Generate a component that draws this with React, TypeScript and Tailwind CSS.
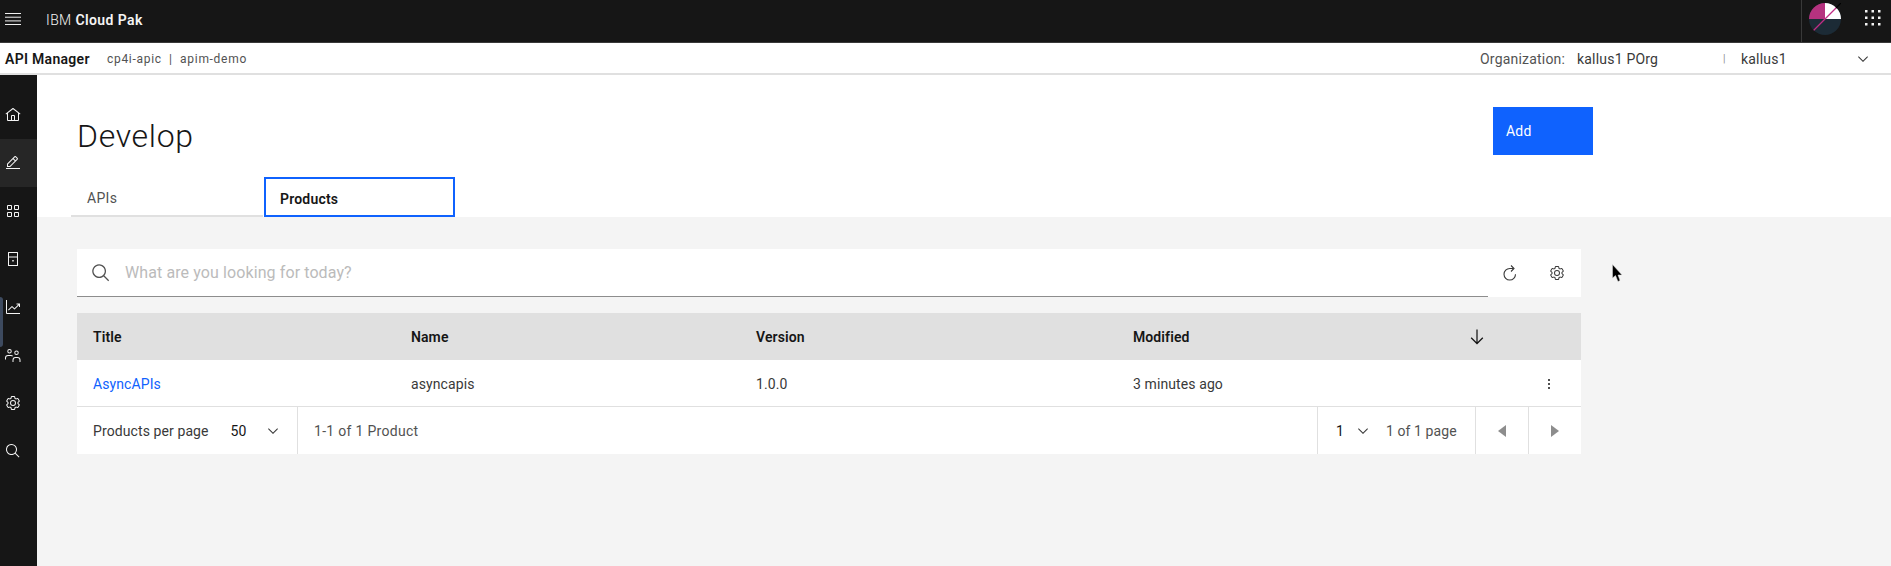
import React from "react";

const GEAR = "M27,16.76c0-.25,0-.5,0-.76s0-.51,0-.77l1.92-1.68A2,2,0,0,0,29.3,11L26.94,7a2,2,0,0,0-1.73-1,2,2,0,0,0-.64.1l-2.43.82a11.35,11.35,0,0,0-1.31-.75l-.51-2.52a2,2,0,0,0-2-1.61H13.64a2,2,0,0,0-2,1.61l-.51,2.52a11.48,11.48,0,0,0-1.32.75L7.43,6.06A2,2,0,0,0,6.79,6,2,2,0,0,0,5.06,7L2.7,11a2,2,0,0,0,.41,2.51L5,15.24c0,.25,0,.5,0,.76s0,.51,0,.77L3.11,18.45A2,2,0,0,0,2.7,21L5.06,25a2,2,0,0,0,1.73,1,2,2,0,0,0,.64-.1l2.43-.82a11.35,11.35,0,0,0,1.31.75l.51,2.52a2,2,0,0,0,2,1.61h4.72a2,2,0,0,0,2-1.61l.51-2.52a11.48,11.48,0,0,0,1.32-.75l2.42.82a2,2,0,0,0,.64.1,2,2,0,0,0,1.73-1L29.3,21a2,2,0,0,0-.41-2.51ZM25.21,24l-3.43-1.16a8.86,8.86,0,0,1-2.71,1.57L18.36,28H13.64l-.71-3.55a9.36,9.36,0,0,1-2.7-1.57L6.79,24,4.43,20l2.72-2.4a8.9,8.9,0,0,1,0-3.13L4.43,12,6.79,8l3.43,1.16a8.86,8.86,0,0,1,2.71-1.57L13.64,4h4.72l.71,3.55a9.36,9.36,0,0,1,2.7,1.57L25.21,8,27.57,12l-2.72,2.4a8.9,8.9,0,0,1,0,3.13L27.57,20Z M16,22a6,6,0,1,1,6-6A5.94,5.94,0,0,1,16,22Zm0-10a3.91,3.91,0,0,0-4,4,3.91,3.91,0,0,0,4,4,3.91,3.91,0,0,0,4-4A3.91,3.91,0,0,0,16,12Z";

const I = ({ children, s = 16, c = "" }: { children: React.ReactNode; s?: number; c?: string }) => (
  <svg width={s} height={s} viewBox="0 0 32 32" fill="currentColor" className={"block shrink-0 " + c}>{children}</svg>
);

const Home = () => <I><path d="M16.6123,2.2138a1.01,1.01,0,0,0-1.2427,0L1,13.4194l1.2427,1.5717L4,13.6209V26a2.0041,2.0041,0,0,0,2,2H26a2.0037,2.0037,0,0,0,2-2V13.63L29.7573,15,31,13.4282ZM18,26H14V18h4Zm2,0V18a2.0023,2.0023,0,0,0-2-2H14a2.002,2.002,0,0,0-2,2v8H6V12.0615l10-7.79,10,7.8005V26Z" /></I>;
const Edit = () => <I><path d="M2 26H30V28H2zM25.4 9c.8-.8.8-2 0-2.8l-3.6-3.6c-.8-.8-2-.8-2.8 0l-15 15V24h6.4L25.4 9zM20.4 4L24 7.6l-3 3L17.4 7 20.4 4zM6 22v-3.6l10-10 3.6 3.6-10 10H6z" /></I>;
const Apps = () => <I><path d="M12 4H6a2 2 0 0 0-2 2v6a2 2 0 0 0 2 2h6a2 2 0 0 0 2-2V6a2 2 0 0 0-2-2zm0 8H6V6h6zM26 4h-6a2 2 0 0 0-2 2v6a2 2 0 0 0 2 2h6a2 2 0 0 0 2-2V6a2 2 0 0 0-2-2zm0 8h-6V6h6zM12 18H6a2 2 0 0 0-2 2v6a2 2 0 0 0 2 2h6a2 2 0 0 0 2-2v-6a2 2 0 0 0-2-2zm0 8H6v-6h6zM26 18h-6a2 2 0 0 0-2 2v6a2 2 0 0 0 2 2h6a2 2 0 0 0 2-2v-6a2 2 0 0 0-2-2zm0 8h-6v-6h6z" /></I>;
const Book = () => <I><path d="M7 2h18a1 1 0 0 1 1 1v26a1 1 0 0 1-1 1H7a1 1 0 0 1-1-1V3a1 1 0 0 1 1-1zm1 2v7h16V4zm0 9v15h16V13z" /><rect x="14.5" y="18" width="3" height="3" /></I>;
const Chart = () => <I><path d="M4 2H2v26a2 2 0 0 0 2 2h26v-2H4z" /><path d="M30 9h-7v2h3.59L19 18.59l-4.29-4.3a1 1 0 0 0-1.42 0L6 21.59 7.41 23 14 16.41l4.29 4.3a1 1 0 0 0 1.42 0L28 12.41V16h2z" /></I>;
const Users = () => <I><path d="M9 13a4.5 4.5 0 1 0 0-9 4.5 4.5 0 0 0 0 9zm0-7a2.5 2.5 0 1 1 0 5 2.5 2.5 0 0 1 0-5zM23 16a4.5 4.5 0 1 0 0-9 4.5 4.5 0 0 0 0 9zm0-7a2.5 2.5 0 1 1 0 5 2.5 2.5 0 0 1 0-5z" /><path d="M2 25H0v-3a6 6 0 0 1 6-6h6a6 6 0 0 1 4 1.6l-1.4 1.5A4 4 0 0 0 12 18H6a4 4 0 0 0-4 4zM31 30h-2v-4a4 4 0 0 0-4-4h-4a4 4 0 0 0-4 4v4h-2v-4a6 6 0 0 1 6-6h4a6 6 0 0 1 6 6z" /></I>;
const Gear = ({ s = 16 }: { s?: number }) => <I s={s}><path d={GEAR} /></I>;
const Search = ({ s = 16 }: { s?: number }) => <I s={s}><path d="M29 27.586l-7.552-7.552a11.018 11.018 0 1 0-1.414 1.414L27.586 29zM4 13a9 9 0 1 1 9 9 9.01 9.01 0 0 1-9-9z" /></I>;
const Refresh = () => (
  <svg width="16" height="16" viewBox="0 0 32 32" fill="none" stroke="currentColor" strokeWidth="2.2" className="block shrink-0">
    <path d="M27 18.5 A11.5 11.5 0 1 1 15.5 7 H23" />
    <path d="M18 1 L24 7 L18 13" />
  </svg>
);
const Chevron = ({ s = 16 }: { s?: number }) => <I s={s}><path d="M16 22 6 12l1.4-1.4 8.6 8.6 8.6-8.6L26 12z" /></I>;
const ArrowDown = () => <I s={20}><path d="M24.59 16.59 17 24.17V4h-2v20.17l-7.59-7.58L6 18l10 10 10-10z" /></I>;
const Kebab = () => <I><circle cx="16" cy="8" r="2" /><circle cx="16" cy="16" r="2" /><circle cx="16" cy="24" r="2" /></I>;
const Hamburger = () => <svg width="16" height="12" viewBox="0 0 16 12" fill="#f0f0f0" className="block"><rect y="0" width="16" height="1" /><rect y="3.7" width="16" height="1" /><rect y="7.4" width="16" height="1" /><rect y="11" width="16" height="1" /></svg>;

const Avatar = () => (
  <svg width="32" height="32" viewBox="0 0 32 32" className="block">
    <clipPath id="c"><circle cx="16" cy="16" r="16" /></clipPath>
    <g clipPath="url(#c)">
      <rect width="32" height="32" fill="#1c2b36" />
      <rect width="16" height="16" fill="#b5327f" />
      <rect x="16" width="16" height="16" fill="#ffffff" />
      <path d="M4 28 L28 4" stroke="#c02c85" strokeWidth="1.2" />
    </g>
    <path d="M27 5 L32 0" stroke="#000" strokeWidth="1.2" />
  </svg>
);

const Switcher = () => (
  <svg width="16" height="16" viewBox="0 0 16 16" fill="#f4f4f4" className="block">
    {[0, 6.5, 13].flatMap((y) => [0, 6.5, 13].map((x) => <rect key={x + "-" + y} x={x} y={y} width="2.5" height="2.5" />))}
  </svg>
);

const Side = ({ children, active = false }: { children: React.ReactNode; active?: boolean }) => (
  <div className={"h-12 flex items-center pl-[5px] text-[#f4f4f4] " + (active ? "bg-[#262626]" : "")}>{children}</div>
);

export default function App() {
  return (
    <div className="relative w-[1891px] h-[566px] overflow-hidden bg-[#f4f4f4] text-[#161616] text-sm font-['Roboto',sans-serif]">
      <header className="h-[43px] bg-[#161616] border-b border-[#393939] flex items-center text-[#f4f4f4]">
        <div className="w-[46px] pl-[5px] -mt-[4px]"><Hamburger /></div>
        <div className="tracking-[0.4px] -mt-[3px]"><span className="font-light">IBM </span><span className="font-semibold">Cloud Pak</span></div>
        <div className="ml-auto h-full w-[90px] border-l border-[#393939] flex items-center">
          <div className="ml-[7px] -mt-[4px]"><Avatar /></div>
          <div className="ml-[24px] -mt-[6px]"><Switcher /></div>
        </div>
      </header>

      <div className="h-[32px] bg-white border-b-2 border-[#e0e0e0] flex items-center pt-[2px]">
        <span className="pl-[5px] w-[107px] font-semibold tracking-[0.3px]">API Manager</span>
        <span className="text-xs text-[#525252] tracking-[0.7px]">cp4i-apic&nbsp;&nbsp;|&nbsp;&nbsp;apim-demo</span>
        <div className="ml-auto flex items-center text-[#393939]">
          <span className="w-[97px] text-[#525252] tracking-[0.2px]">Organization:</span>
          <span className="w-[146px] tracking-[0.2px]">kallus1 POrg</span>
          <span className="w-[18px] text-[10px] text-[#8d8d8d]">|</span>
          <span className="w-[114px] tracking-[0.2px]">kallus1</span>
          <span className="w-[36px] text-[#393939]"><Chevron /></span>
        </div>
      </div>

      <div className="flex h-[491px]">
        <nav className="w-[37px] shrink-0 bg-[#161616] pt-4">
          <Side><Home /></Side>
          <Side active><Edit /></Side>
          <Side><Apps /></Side>
          <Side><Book /></Side>
          <Side><Chart /></Side>
          <Side><Users /></Side>
          <Side><Gear /></Side>
          <Side><Search /></Side>
        </nav>

        <main className="flex-1 min-w-0">
          <section className="h-[142px] bg-white relative">
            <div className="flex pl-[40px] pt-[32px] w-[1556px] justify-between">
              <h1 className="text-[32px] leading-[58px] font-light tracking-[0.7px]">Develop</h1>
              <button className="w-[100px] h-12 bg-[#0f62fe] text-white text-left pl-[13px] text-sm tracking-[0.2px]">Add</button>
            </div>
            <div className="flex pl-[34px] absolute bottom-0 left-0 items-end">
              <div className="w-[192px] h-[40px] border-b-2 border-[#e0e0e0] pl-[16px] pt-[4px] flex items-center text-[#525252] tracking-[0.3px]">APIs</div>
              <div className="ml-[1px] w-[191px] h-[40px] border-2 border-[#0f62fe] pl-[14px] pt-[3px] flex items-center font-semibold tracking-[0.2px]">Products</div>
            </div>
          </section>

          <section className="pl-[40px] pt-[32px] w-[1544px]">
            <div className="h-12 bg-white flex items-stretch">
              <div className="w-[1411px] border-b border-[#8d8d8d] flex items-center">
                <span className="ml-[14px] text-[#525252]"><Search s={20} /></span>
                <span className="ml-[14px] text-base text-[#bbbbbb] tracking-[0.1px]">What are you looking for today?</span>
              </div>
              <div className="ml-[14px] mt-[16px] text-[#393939]"><Refresh /></div>
              <div className="ml-[31px] mt-[16px] text-[#393939]"><Gear /></div>
            </div>

            <div className="mt-[16px]">
              <div className="h-[47px] bg-[#e0e0e0] grid grid-cols-[318px_345px_377px_334px_1fr] items-center font-semibold pl-[16px] tracking-[0.1px]">
                <span>Title</span>
                <span>Name</span>
                <span>Version</span>
                <span>Modified</span>
                <span className="text-[#161616]"><ArrowDown /></span>
              </div>
              <div className="h-[47px] bg-white border-b border-[#e0e0e0] grid grid-cols-[318px_345px_377px_408px_1fr] items-center pl-[16px] pt-[2px] text-[#393939] tracking-[0.1px]">
                <span className="text-[#0f62fe]">AsyncAPIs</span>
                <span>asyncapis</span>
                <span>1.0.0</span>
                <span>3 minutes ago</span>
                <span className="text-[#161616]"><Kebab /></span>
              </div>
              <div className="h-[47px] bg-white flex items-stretch text-[#393939]">
                <div className="w-[221px] border-r border-[#e0e0e0] flex items-center pl-[16px]">
                  <span className="tracking-[0.1px]">Products per page</span>
                  <span className="ml-[22px] text-[#161616]">50</span>
                  <span className="ml-[19px]"><Chevron /></span>
                </div>
                <div className="flex-1 flex items-center pl-[16px] text-[#525252] tracking-[0.3px]">1-1 of 1 Product</div>
                <div className="w-[158px] border-l border-[#e0e0e0] flex items-center pl-[18px]">
                  <span className="text-[#161616]">1</span>
                  <span className="ml-[11px]"><Chevron /></span>
                  <span className="ml-[15px] text-[#525252] tracking-[0.1px]">1 of 1 page</span>
                </div>
                <div className="w-[53px] border-l border-[#e0e0e0] flex items-center justify-center">
                  <svg width="8" height="12" viewBox="0 0 8 12" fill="#8d8d8d" className="block"><path d="M8 0v12L0 6z" /></svg>
                </div>
                <div className="w-[53px] border-l border-[#e0e0e0] flex items-center justify-center">
                  <svg width="8" height="12" viewBox="0 0 8 12" fill="#8d8d8d" className="block"><path d="M0 0v12l8-6z" /></svg>
                </div>
              </div>
            </div>
          </section>
        </main>
      </div>

      <div className="absolute left-0 top-[297px] w-[3px] h-[50px] rounded-r-[3px] bg-[#3d4a5f]" />
      <svg width="12" height="19" viewBox="0 0 12 19" className="absolute left-[1612px] top-[264px]">
        <path d="M0.5 0.5 L0.5 14 L3.5 11.5 L6 17.5 L8 16.5 L6 11 L10 11 Z" fill="#000" stroke="#ddd" strokeWidth=".5" />
      </svg>
    </div>
  );
}
